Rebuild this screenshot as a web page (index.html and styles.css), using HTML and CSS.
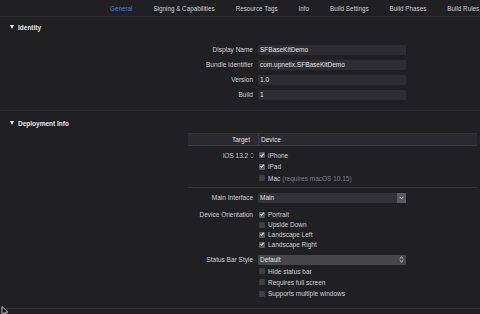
FILE: index.html
```html
<html>

	<head>
		<meta charset="utf-8">
		<title>General</title>
		<link rel="stylesheet" href="styles.css">
	</head>

	<body>
		<div class="tabs">
			<span class="tab active">General</span>
			<span class="tab">Signing &amp; Capabilities</span>
			<span class="tab">Resource Tags</span>
			<span class="tab">Info</span>
			<span class="tab">Build Settings</span>
			<span class="tab">Build Phases</span>
			<span class="tab">Build Rules</span>
		</div>

		<div class="section identity">
			<div class="head"><span class="tri"></span>Identity</div>
			<div class="body">
				<div class="row"><label>Display Name</label><div class="field">SFBaseKitDemo</div></div>
				<div class="row"><label>Bundle Identifier</label><div class="field">com.upnetix.SFBaseKitDemo</div></div>
				<div class="row"><label>Version</label><div class="field">1.0</div></div>
				<div class="row"><label>Build</label><div class="field">1</div></div>
			</div>
		</div>

		<div class="section deploy">
			<div class="head"><span class="tri"></span>Deployment Info</div>

			<div class="targets">
				<div class="thead">
					<div class="th-target">Target</div>
					<div class="th-device">Device</div>
				</div>
				<div class="tbody">
					<div class="trow">
						<div class="tlabel">iOS 13.2
							<svg class="stepper" width="4" height="7" viewBox="0 0 4 7"><path d="M0.5 2.5 L2 1 L3.5 2.5 M0.5 4.5 L2 6 L3.5 4.5" fill="none" stroke="#9a9a9c" stroke-width="0.8"/></svg>
						</div>
						<span class="cb on"></span>iPhone
					</div>
					<div class="trow"><div class="tlabel"></div><span class="cb on"></span>iPad</div>
					<div class="trow"><div class="tlabel"></div><span class="cb"></span>Mac <span class="dim">(requires macOS 10.15)</span></div>
				</div>
			</div>

			<div class="row main-if">
				<label>Main Interface</label>
				<div class="popup">Main
					<span class="arrow"><svg width="5" height="4" viewBox="0 0 5 4"><path d="M0.8 1 L2.5 2.8 L4.2 1" fill="none" stroke="#e8e8e8" stroke-width="0.9"/></svg></span>
				</div>
			</div>

			<div class="group orient">
				<div class="row"><label>Device Orientation</label><span class="cb on"></span>Portrait</div>
				<div class="row"><label></label><span class="cb"></span>Upside Down</div>
				<div class="row"><label></label><span class="cb on"></span>Landscape Left</div>
				<div class="row"><label></label><span class="cb on"></span>Landscape Right</div>
			</div>

			<div class="row status">
				<label>Status Bar Style</label>
				<div class="popup light">Default
					<svg class="updown" width="5" height="7" viewBox="0 0 5 7"><path d="M0.8 2.6 L2.5 1 L4.2 2.6 M0.8 4.4 L2.5 6 L4.2 4.4" fill="none" stroke="#e8e8e8" stroke-width="0.9"/></svg>
				</div>
			</div>

			<div class="group opts">
				<div class="row"><label></label><span class="cb"></span>Hide status bar</div>
				<div class="row"><label></label><span class="cb"></span>Requires full screen</div>
				<div class="row"><label></label><span class="cb"></span>Supports multiple windows</div>
			</div>
		</div>

		<svg class="cursor" width="8" height="10" viewBox="0 0 8 10"><path d="M1 0.5 L1 8.5 L3 6.6 L4.4 9.6 L5.6 9 L4.3 6.2 L7 6.2 Z" fill="#111" stroke="#e0e0e0" stroke-width="0.8"/></svg>
	</body>

</html>
```

FILE: styles.css
```css
* {
	margin: 0;
	padding: 0;
	box-sizing: border-box;
}

body {
	width: 480px;
	height: 314px;
	overflow: hidden;
	position: relative;
	background: #201f22;
	color: #d2d2d4;
	font-family: "Liberation Sans", Arial, sans-serif;
	font-size: 6.5px;
}

/* tab bar */
.tabs {
	height: 17px;
	display: flex;
	align-items: center;
	gap: 21px;
	padding-left: 110px;
	border-bottom: 1px solid #2f2e32;
	white-space: nowrap;
	overflow: hidden;
	color: #cfcfd1;
	font-size: 6.3px;
}

.tab {
	flex: none;
}

.tab.active {
	color: #3d83ee;
}

/* sections */
.head {
	display: flex;
	align-items: center;
	height: 20px;
	padding-left: 10px;
	font-weight: bold;
	color: #e6e6e8;
}

.tri {
	width: 0;
	height: 0;
	border-left: 2.5px solid transparent;
	border-right: 2.5px solid transparent;
	border-top: 4px solid #e6e6e8;
	margin-right: 4px;
}

.identity {
	border-bottom: 1px solid #2f2e32;
}

.identity .body {
	padding: 5px 0 8px;
}

.row {
	display: flex;
	align-items: center;
	height: 15px;
}

.row label {
	width: 258px;
	flex: none;
	text-align: right;
	padding-right: 5px;
}

.field {
	width: 148px;
	height: 10px;
	line-height: 10px;
	padding-left: 2px;
	background: #2e2d31;
	color: #e2e2e4;
}

.deploy .head {
	height: 22px;
	padding-top: 2px;
}

/* target table */
.targets {
	margin-left: 188px;
	width: 289px;
	border-bottom: 1px solid #333236;
}

.thead {
	display: flex;
	height: 13px;
	background: #2a292d;
	border-top: 1px solid #343337;
	border-bottom: 1px solid #38373b;
	line-height: 11px;
	color: #e2e2e4;
}

.th-target {
	width: 71px;
	text-align: right;
	padding-right: 8px;
	border-right: 1px solid #3e3d41;
}

.th-device {
	padding-left: 2px;
}

.tbody {
	padding: 3.25px 0;
}

.trow {
	display: flex;
	align-items: center;
	height: 11.5px;
}

.tlabel {
	width: 70px;
	flex: none;
	text-align: right;
	padding-right: 4px;
}

.stepper {
	vertical-align: -1px;
}

.dim {
	color: #7d7c80;
	margin-left: 2px;
}

/* checkboxes */
.cb {
	width: 6px;
	height: 6px;
	margin: 0 3px 0 1px;
	border-radius: 1px;
	background: #3e3d41;
	flex: none;
	position: relative;
}

.cb.on {
	background: #5c5b5f;
}

.cb.on::after {
	content: "";
	position: absolute;
	left: 1.9px;
	top: 0.6px;
	width: 1.4px;
	height: 3.2px;
	border-right: 1px solid #f2f2f2;
	border-bottom: 1px solid #f2f2f2;
	transform: rotate(40deg);
}

/* popups */
.main-if {
	margin-top: 4px;
	height: 11px;
}

.popup {
	position: relative;
	width: 148px;
	height: 10px;
	line-height: 10px;
	padding-left: 2px;
	background: #333236;
	color: #e2e2e4;
	border-radius: 1px;
}

.popup .arrow {
	position: absolute;
	right: 0;
	top: 0;
	width: 9px;
	height: 10px;
	background: #5a595d;
	display: flex;
	align-items: center;
	justify-content: center;
}

.popup.light {
	background: #474649;
}

.updown {
	position: absolute;
	right: 2px;
	top: 1.5px;
}

.orient {
	margin-top: 6.7px;
}

.orient .row {
	height: 10px;
}

.status {
	margin-top: 4.5px;
	height: 11px;
}

.opts {
	margin-top: 0.5px;
	padding-bottom: 8.7px;
	border-bottom: 1px solid #2f2e32;
}

.opts .row {
	height: 11.2px;
}

.cursor {
	position: absolute;
	left: 1px;
	top: 306px;
}
```
